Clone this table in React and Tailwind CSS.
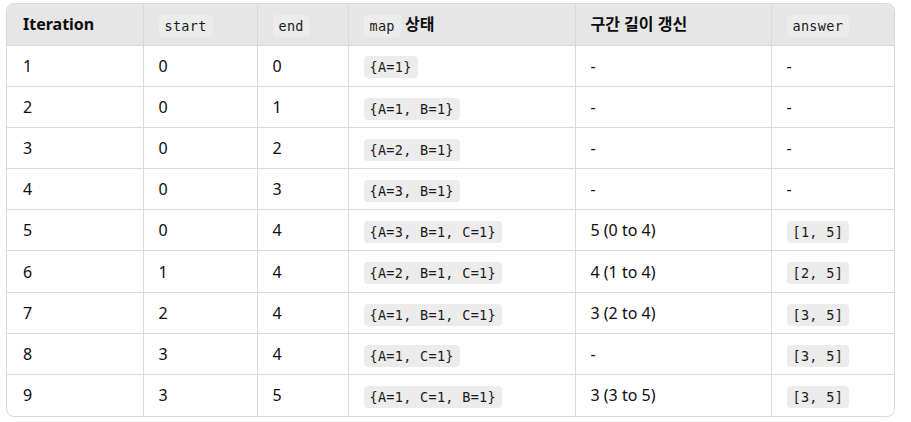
import React from "react";

const rows = [
  ["1", "0", "0", "{A=1}", "-", "-"],
  ["2", "0", "1", "{A=1, B=1}", "-", "-"],
  ["3", "0", "2", "{A=2, B=1}", "-", "-"],
  ["4", "0", "3", "{A=3, B=1}", "-", "-"],
  ["5", "0", "4", "{A=3, B=1, C=1}", "5 (0 to 4)", "[1, 5]"],
  ["6", "1", "4", "{A=2, B=1, C=1}", "4 (1 to 4)", "[2, 5]"],
  ["7", "2", "4", "{A=1, B=1, C=1}", "3 (2 to 4)", "[3, 5]"],
  ["8", "3", "4", "{A=1, C=1}", "-", "[3, 5]"],
  ["9", "3", "5", "{A=1, C=1, B=1}", "3 (3 to 5)", "[3, 5]"],
];

function Code({ children }) {
  return (
    <code className="rounded-[4px] bg-[#ececec] px-[6px] py-[3px] align-[-1px] text-[13.5px] font-normal text-[#1a1a1a] [font-family:'DejaVu_Sans_Mono',monospace] tracking-[0.3px] whitespace-pre">
      {children}
    </code>
  );
}

export default function App() {
  const widths = ["w-[136px]", "w-[114px]", "w-[91px]", "w-[227px]", "w-[196px]", "w-[125px]"];
  const cell = (i) =>
    `pl-[15px] pr-4 border-l ${i < rows.length - 1 ? "border-b" : ""} border-[#d9d9d9]`;
  return (
    <div className="w-[911px] h-[422px] bg-white pt-[3px] pl-[6px] [font-family:'Noto_Sans','Noto_Sans_CJK_KR',sans-serif] text-[#0d0d0d]">
      <div className="w-[889px] overflow-hidden rounded-[8px] border border-[#d9d9d9]">
        <table className="w-full table-fixed border-collapse text-[16px]">
          <colgroup>
            {widths.map((w, i) => (
              <col key={i} className={w} />
            ))}
          </colgroup>
          <thead>
            <tr className="h-[41px] bg-[#e6e6e6] text-left">
              <th className="pl-4 pr-4 font-bold border-b border-[#d9d9d9]">Iteration</th>
              <th className="pl-[15px] pr-4 font-bold border-b border-l border-[#d9d9d9]"><Code>start</Code></th>
              <th className="pl-[15px] pr-4 font-bold border-b border-l border-[#d9d9d9]"><Code>end</Code></th>
              <th className="pl-[15px] pr-4 font-bold border-b border-l border-[#d9d9d9]"><Code>map</Code> 상태</th>
              <th className="pl-[15px] pr-4 font-bold border-b border-l border-[#d9d9d9]">구간 길이 갱신</th>
              <th className="pl-[15px] pr-4 font-bold border-b border-l border-[#d9d9d9]"><Code>answer</Code></th>
            </tr>
          </thead>
          <tbody>
            {rows.map((r, i) => (
              <tr key={i} className="h-[41.2px]">
                <td className={`pl-4 pr-4 ${i < rows.length - 1 ? "border-b" : ""} border-[#d9d9d9]`}>{r[0]}</td>
                <td className={cell(i)}>{r[1]}</td>
                <td className={cell(i)}>{r[2]}</td>
                <td className={cell(i)}><Code>{r[3]}</Code></td>
                <td className={cell(i)}>{r[4]}</td>
                <td className={cell(i)}>
                  {r[5] === "-" ? r[5] : <Code>{r[5]}</Code>}
                </td>
              </tr>
            ))}
          </tbody>
        </table>
      </div>
    </div>
  );
}
